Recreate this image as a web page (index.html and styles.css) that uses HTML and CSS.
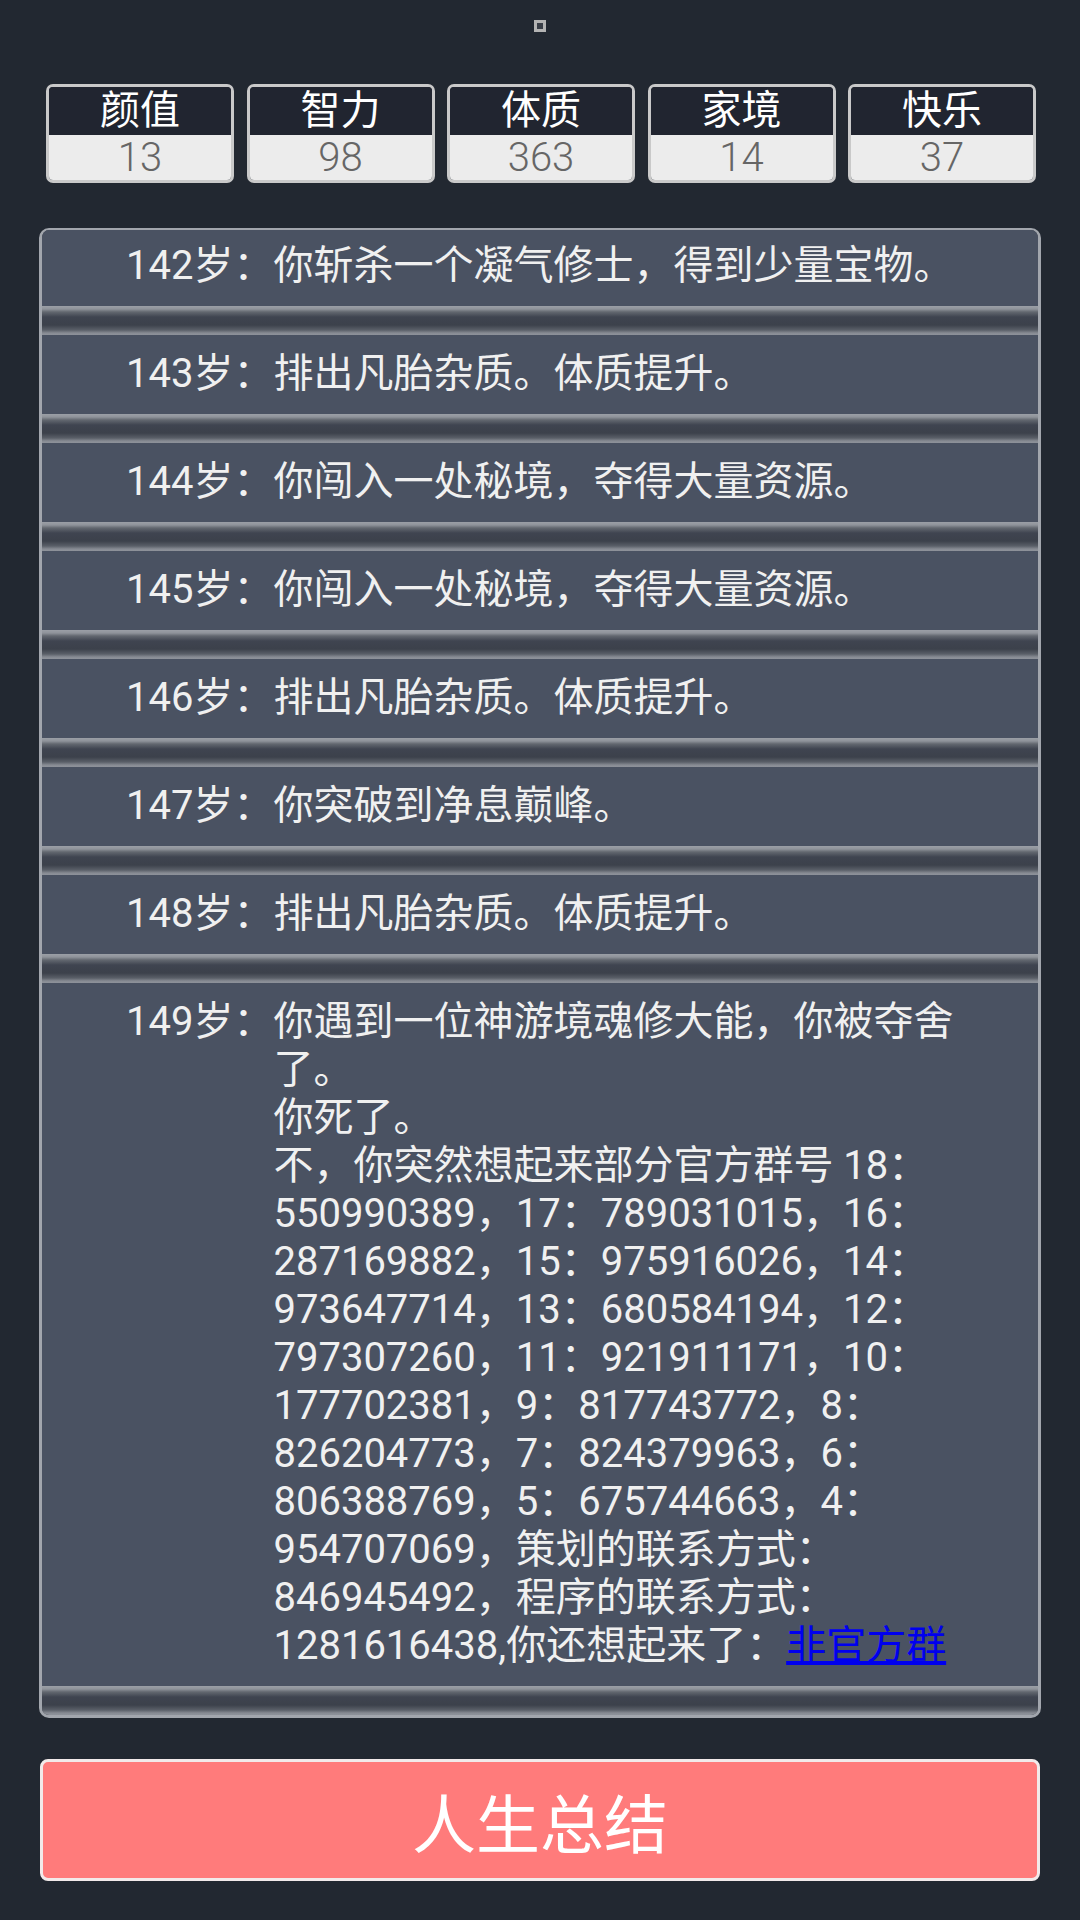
FILE: index.html
```html
<!DOCTYPE html>
<html lang="zh-CN">
<head>
    <meta charset="UTF-8">
    <meta name="viewport" content="width=device-width, initial-scale=1.0">
    <title>人生重开模拟器</title>
    <link rel="stylesheet" href="styles.css">
</head>
<body>
    <div class="dot"></div>

    <ul class="stats">
        <li class="stat"><div class="stat-name">颜值</div><div class="stat-value">13</div></li>
        <li class="stat"><div class="stat-name">智力</div><div class="stat-value">98</div></li>
        <li class="stat"><div class="stat-name">体质</div><div class="stat-value">363</div></li>
        <li class="stat"><div class="stat-name">家境</div><div class="stat-value">14</div></li>
        <li class="stat"><div class="stat-name">快乐</div><div class="stat-value">37</div></li>
    </ul>

    <div class="panel">
        <ul class="events">
            <li><span class="age">142岁：</span><span class="text">你斩杀一个凝气修士，得到少量宝物。</span></li>
            <li><span class="age">143岁：</span><span class="text">排出凡胎杂质。体质提升。</span></li>
            <li><span class="age">144岁：</span><span class="text">你闯入一处秘境，夺得大量资源。</span></li>
            <li><span class="age">145岁：</span><span class="text">你闯入一处秘境，夺得大量资源。</span></li>
            <li><span class="age">146岁：</span><span class="text">排出凡胎杂质。体质提升。</span></li>
            <li><span class="age">147岁：</span><span class="text">你突破到净息巅峰。</span></li>
            <li><span class="age">148岁：</span><span class="text">排出凡胎杂质。体质提升。</span></li>
            <li>
                <span class="age">149岁：</span>
                <span class="text">你遇到一位神游境魂修大能，你被夺舍了。<br>你死了。<br>不，你突然想起来部分官方群号 18：550990389，17：789031015，16：287169882，15：975916026，14：973647714，13：680584194，12：797307260，11：921911171，10：177702381，9：817743772，8：826204773，7：824379963，6：806388769，5：675744663，4：954707069，策划的联系方式：846945492，程序的联系方式：1281616438,你还想起来了：<a href="#">非官方群</a></span>
            </li>
        </ul>
    </div>

    <button class="summary">人生总结</button>
</body>
</html>
```

FILE: styles.css
```css
body {
    margin: 0;
    background-color: #222831;
    font-family: Roboto, "Noto Sans CJK SC", sans-serif;
    color: #f0f0f0;
}
ul {
    list-style: none;
    margin: 0;
    padding: 0;
}
.dot {
    width: 6px;
    height: 6px;
    margin: 20px auto 0;
    border: 3px solid #b4b4b4;
    background: #3a3f48;
}
.stats {
    display: grid;
    grid-template-columns: repeat(5, 188px);
    column-gap: 12.5px;
    margin: 52px 0 0 46px;
}
.stat {
    border: 3px solid #c9c9c9;
    border-radius: 7px;
    overflow: hidden;
    text-align: center;
}
.stat-name {
    height: 48px;
    line-height: 48px;
    font-size: 40px;
    background: #212530;
    color: #fff;
}
.stat-value {
    height: 45px;
    line-height: 45px;
    font-size: 40px;
    font-weight: 300;
    background: #ececec;
    color: #666;
}
.panel {
    box-sizing: border-box;
    width: 1002px;
    height: 1490px;
    margin: 45px 0 0 39px;
    border: 3px solid #a2a6ad;
    border-top-width: 2px;
    border-radius: 10px;
    overflow: hidden;
    background: #3c414c;
}
.events {
    margin-top: -3px;
}
.events li {
    display: flex;
    padding: 15px 66px 45px 84px;
    font-size: 40px;
    line-height: 48px;
    background:
        linear-gradient(#4a5262, #4a5262) top / 100% calc(100% - 29px) no-repeat,
        linear-gradient(#9b9fa6 0, #8f939a 3px, #62676f 6px, #3f4450 11px, #3c414b 19px, #5a5f68 24px, #878b93 27px, #8e929a 29px) bottom / 100% 29px no-repeat;
}
.age {
    flex: none;
}
.text {
    flex: 1;
}
.text a {
    color: #0000ee;
}
.summary {
    display: block;
    width: 1000px;
    height: 122px;
    margin: 41px 0 0 40px;
    border: 3px solid #f2eaea;
    border-radius: 8px;
    background: #ff7b7b;
    color: #fff;
    font-family: Roboto, "Noto Sans CJK SC", sans-serif;
    font-size: 64px;
    cursor: pointer;
}
```
